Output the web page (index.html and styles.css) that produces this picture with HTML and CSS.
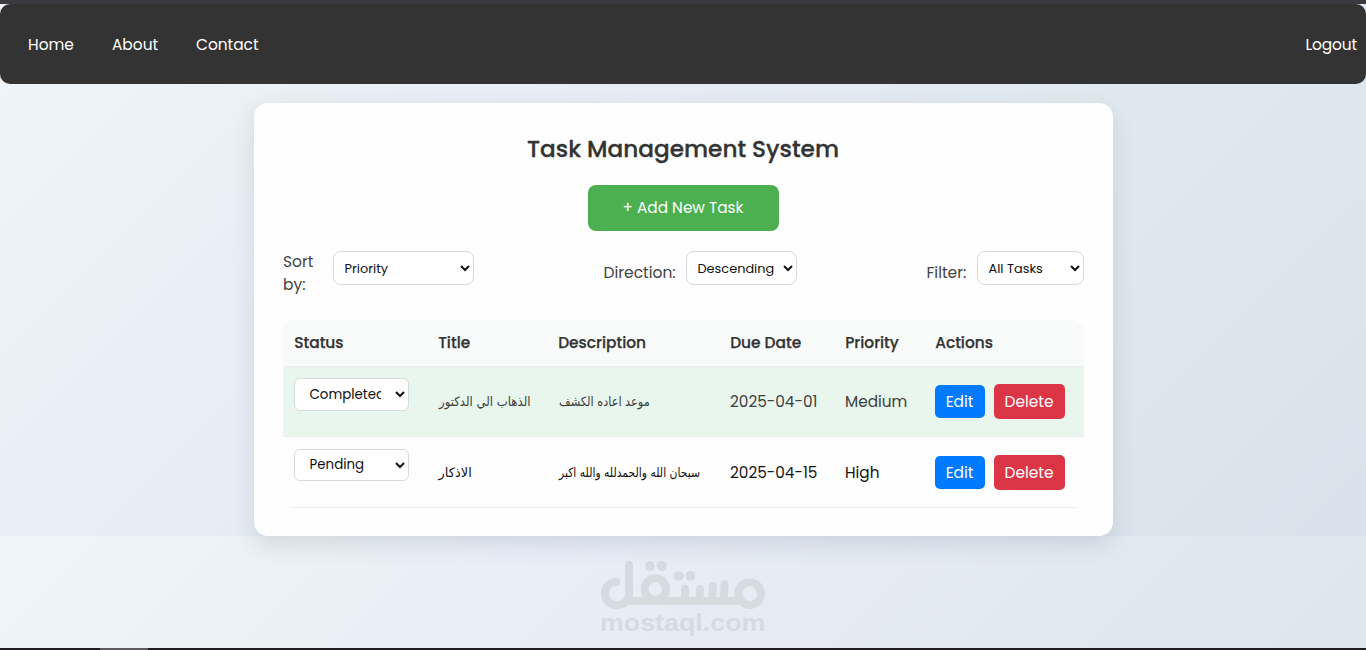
FILE: index.html
```html
<!DOCTYPE html>
<html lang="en">
<head>
<meta charset="utf-8">
<title>Task Management System</title>
<link rel="stylesheet" href="styles.css">
</head>
<body>
<div class="page">
  <nav class="navbar">
    <div class="nav-links"><a class="l-home">Home</a><a class="l-about">About</a><a class="l-contact">Contact</a></div>
    <a class="logout">Logout</a>
  </nav>
  <main class="card">
    <h1 class="heading">Task Management System</h1>
    <button class="add">+ Add New Task</button>
    <div class="filters">
      <div class="group"><label class="label sort">Sort by:</label><select class="select s-sort"><option>Priority</option></select></div>
      <div class="group"><label class="label direction">Direction:</label><select class="select s-dir"><option>Descending</option></select></div>
      <div class="group"><label class="label filter">Filter:</label><select class="select s-filter"><option>All Tasks</option></select></div>
    </div>
    <div class="table">
      <div class="row head"><span>Status</span><span>Title</span><span>Description</span><span>Due Date</span><span>Priority</span><span>Actions</span></div>
      <div class="row task done">
        <div class="status"><select class="select s-status"><option>Completed</option></select></div>
        <span class="ar"><bdi class="t1">الذهاب الي الدكتور</bdi></span>
        <span class="ar"><bdi class="t2">موعد اعاده الكشف</bdi></span>
        <span class="date">2025-04-01</span><span class="prio">Medium</span>
        <div class="actions"><button class="btn edit">Edit</button><button class="btn delete">Delete</button></div>
      </div>
      <div class="row task">
        <div class="status"><select class="select s-status s-pending"><option>Pending</option></select></div>
        <span class="ar"><bdi class="t3">الاذكار</bdi></span>
        <span class="ar"><bdi class="t4">سبحان الله والحمدلله والله اكبر</bdi></span>
        <span class="date">2025-04-15</span><span class="prio">High</span>
        <div class="actions"><button class="btn edit">Edit</button><button class="btn delete">Delete</button></div>
      </div>
    </div>
  </main>
  <svg class="watermark" viewBox="0 0 630 315" aria-label="mostaql.com">
    <g fill="none" stroke="#d6dbe0" stroke-width="24" stroke-linecap="round" stroke-linejoin="round">
      <path d="M109 111C87 110 75 128 75 146C75 166 90 180 109 180C132 180 147 168 147 146V60"/>
      <path d="M147 168H480"/>
      <circle cx="226" cy="132" r="32"/>
      <path d="M315 168V132M358 168L360 132M396 168L399 123M430 168L434 117"/>
      <circle cx="509" cy="146" r="34"/>
    </g>
    <g fill="#d6dbe0"><circle cx="210" cy="63" r="15"/><circle cx="245" cy="63" r="15"/><circle cx="296" cy="93" r="15"/><circle cx="331" cy="93" r="15"/></g>
    <text class="wm-text" x="60" y="257" textLength="496" lengthAdjust="spacingAndGlyphs">mostaql.com</text>
  </svg>
  <div class="taskbar"><i></i></div>
</div>
</body>
</html>
```
FILE: styles.css
```css
* { box-sizing: border-box; }
body { margin: 0; overflow: hidden; }
.page {
  position: relative;
  height: 650px;
  border-top: 4px solid #3b3b3f;
  display: flex;
  flex-direction: column;
  align-items: center;
  font-family: Poppins, Inter, "Open Sans", sans-serif;
  font-size: 16px;
  color: #151515;
  background: linear-gradient(135deg, #eff5f8 0%, #ebf1f5 18%, #e9eef7 28%, #e1e9f0 62%, #d9e1ea 100%) 0 0 / 100% 532px repeat-y;
}
.navbar {
  width: 100%;
  height: 80px;
  flex: none;
  padding: 1px 9px 0 28px;
  display: flex;
  align-items: center;
  justify-content: space-between;
  background: #333;
  border-radius: 10px;
  color: #fff;
  font-size: 15.4px;
}
.nav-links { display: flex; gap: 38px; }
.l-home { width: 46px; }
.l-about { width: 46px; }
.logout { letter-spacing: -.1px; }
.card {
  width: 859px;
  height: 433px;
  flex: none;
  margin-top: 19px;
  padding: 29px;
  display: flex;
  flex-direction: column;
  align-items: center;
  background: #fefefe;
  border-radius: 14px;
  box-shadow: 0 8px 22px rgba(70, 90, 105, .16);
}
.heading { margin: 0; height: 34px; flex: none; line-height: 34px; font-size: 23.2px; font-weight: 500; -webkit-text-stroke: .3px #333; color: #333; white-space: nowrap; }
.add {
  width: 191px;
  height: 46px;
  flex: none;
  margin-top: 19px;
  border: 0;
  border-radius: 8px;
  background: #4caf50;
  color: #fff;
  padding: 0 0 1px;
  font: 400 15.3px Poppins, Inter, sans-serif;
}
.filters { width: 100%; height: 46px; flex: none; margin-top: 20px; display: flex; justify-content: space-between; }
.group { display: flex; align-items: flex-start; }
.label { line-height: 23px; padding-top: 10px; color: #444; font-size: 15.5px; }
.sort { width: 50px; padding: 0 15px 0 .5px; margin-top: -1px; }
.direction { width: 82px; }
.filter { width: 50px; }
.select {
  height: 34px;
  padding: 0 7px;
  border: 1px solid #d6dbe1;
  border-radius: 8px;
  background-color: #fff;
  color: #111;
  font: 12.9px Poppins, Inter, sans-serif;
}
.s-sort { width: 141px; }
.s-dir { width: 111px; padding-right: 4px; }
.s-filter { width: 107px; }
.table { width: 801px; margin-top: 23px; border-radius: 12px; overflow: hidden; flex: none; }
.row {
  display: grid;
  grid-template-columns: 144px 120px 172px 115px 90px 138px;
  padding-left: 11px;
  align-items: center;
  border-bottom: 1px solid #ebecee;
  white-space: nowrap;
}
.head { height: 46.5px; background: #f9fafa; color: #333; font-weight: 500; font-size: 15.4px; -webkit-text-stroke: .25px #333; }
.head span { padding-left: .7px; }
.task { height: 70.7px; background: #fefefe; }
.done { background: #e9f6ee; color: #3c403d; }
.date, .prio { font-size: 15.3px; padding-left: .5px; }
.status { align-self: start; padding-top: 11.5px; }
.s-status { width: 115px; height: 33px; padding: 0 11px; font-size: 13.4px; border-radius: 6px; display: block; }
.s-pending { height: 32px; }
.ar { font-family: "DejaVu Sans", serif; font-size: 13px; padding-left: 1px; }
.ar bdi { display: inline-block; transform-origin: left; }
.t1 { transform: scaleX(.9); }
.t2 { transform: scaleX(.87); }
.t4 { transform: scaleX(.83); }
.actions { display: flex; align-items: center; gap: 9px; }
.btn { border: 0; padding: 0; border-radius: 5px; color: #fff; font: 15.4px Poppins, Inter, sans-serif; }
.edit { width: 50px; height: 33px; background: #007bff; }
.delete { width: 71px; height: 35px; background: #dc3545; }
.watermark { position: absolute; left: 580px; top: 541px; width: 210px; height: 105px; }
.wm-text { font: bold 72px "Liberation Sans", Arial, sans-serif; fill: #d6dbe0; }
.taskbar { width: 100%; height: 2px; margin-top: auto; background: #201c22; flex: none; }
.taskbar i { display: block; width: 48px; height: 2px; margin-left: 100px; background: #5c595f; }
```
